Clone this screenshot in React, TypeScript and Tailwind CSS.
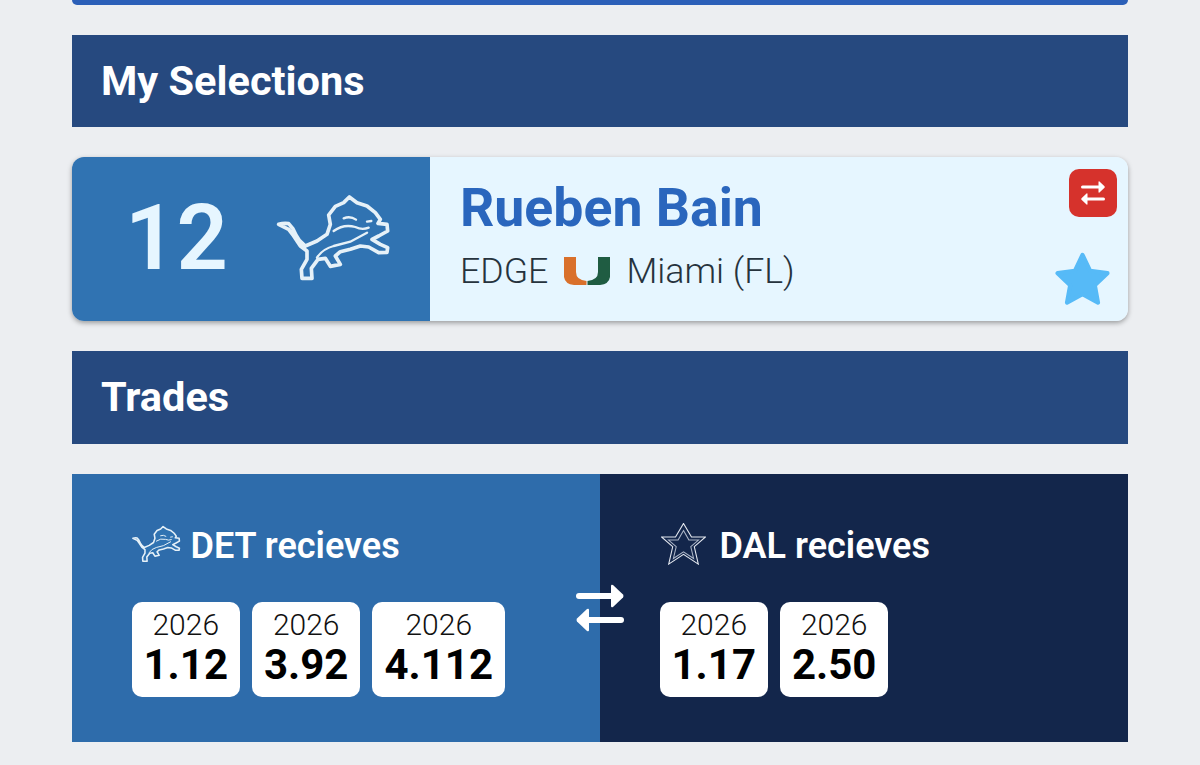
const LION_BODY =
  'M20 100 Q35 96 50 98 L62 112 Q72 135 82 148 L100 165 L135 150 L165 130 L175 100 L170 72 L190 46 L215 35 L232 18 L255 35 L285 45 L310 65 L325 85 L318 97 L345 100 L347 120 L320 135 L300 145 L325 160 L347 170 L345 184 L320 185 L290 168 L265 165 L235 175 L205 182 L190 195 L205 220 L175 226 L160 202 L138 205 L118 232 L120 262 L90 262 L88 235 L105 205 L105 180 L85 165 L65 135 L50 115 Z';

function Lion({ className }: { className: string }) {
  return (
    <svg viewBox="0 0 372 288" className={className}>
      <path d={LION_BODY} fill="#3073b2" stroke="#e6f1f8" strokeWidth="11" strokeLinejoin="round" />
      <path
        d="M185 120 Q215 98 250 108 Q270 118 290 110 M215 82 Q235 74 252 86 M135 200 Q150 175 185 165 L235 152 L285 125 M285 92 L298 90"
        fill="none"
        stroke="#e6f1f8"
        strokeWidth="7"
        strokeLinecap="round"
      />
    </svg>
  );
}

function CowboysStar({ className }: { className: string }) {
  return (
    <svg viewBox="0 0 45 46" preserveAspectRatio="none" className={className}>
      <polygon
        points="22.5,0.5 30.5,15.3 44.5,15.3 33.3,26 37.3,45 22.5,34.3 7.7,45 11.7,26 0.5,15.3 14.5,15.3"
        fill="#13264b"
        stroke="#e4e8ef"
        strokeWidth="1.1"
      />
      <polygon
        points="22.5,8.3 27.9,18.7 37.5,18.7 29.8,26 32.6,38.9 22.5,31.6 12.4,38.9 15.2,26 7.5,18.7 17.1,18.7"
        fill="#13264b"
        stroke="#aab4c6"
        strokeWidth="1.1"
      />
    </svg>
  );
}

function MiamiU({ className }: { className: string }) {
  return (
    <svg viewBox="0 0 46 28" className={className}>
      <path d="M0 0 H12 V15 Q12 23 22.5 24 V28 H10 Q1 27 0 20 Z" fill="#d9702b" />
      <path d="M34 0 H46 V20 Q45 27 36 28 H23.5 V24 Q34 23 34 15 Z" fill="#1f5c42" />
    </svg>
  );
}

function Swap({ className }: { className: string }) {
  return (
    <svg viewBox="0 0 48 48" className={className} fill="white">
      <rect x="0" y="9" width="38" height="6" rx="3" />
      <path d="M35 2 Q35 0 37 1 L47 10.5 Q48 12 47 13.5 L37 23 Q35 24 35 22 Z" />
      <rect x="10" y="33" width="38" height="6" rx="3" />
      <path d="M13 26 Q13 24 11 25 L1 34.5 Q0 36 1 37.5 L11 47 Q13 48 13 46 Z" />
    </svg>
  );
}

function SectionHeader({ title, height }: { title: string; height: string }) {
  return (
    <div className={`${height} flex items-center pl-[29px] bg-[#26497f]`}>
      <h2 className="text-[41.5px] font-bold text-white leading-none">{title}</h2>
    </div>
  );
}

function Pick({ round }: { round: string }) {
  return (
    <div className="h-[95px] px-[12px] pt-[7px] bg-white rounded-[10px] flex flex-col items-center">
      <span className="text-[30px] font-light leading-[32px] text-[#111]">2026</span>
      <span className="text-[42px] font-bold leading-[48px] text-black">{round}</span>
    </div>
  );
}

function TradeSide({
  bg,
  icon,
  label,
  picks,
}: {
  bg: string;
  icon: React.ReactNode;
  label: string;
  picks: string[];
}) {
  return (
    <div className={`flex-1 pl-[59.5px] pt-[48px] ${bg}`}>
      <div className="h-[44px] flex items-center gap-[12px]">
        {icon}
        <span className="pt-[3px] text-[36px] font-semibold text-white leading-none">{label}</span>
      </div>
      <div className="mt-[36px] flex gap-[12px]">
        {picks.map((p) => (
          <Pick key={p} round={p} />
        ))}
      </div>
    </div>
  );
}

export default function App() {
  return (
    <div className="h-[765px] overflow-hidden bg-[#eceef1] px-[72px] font-['Roboto',sans-serif]">
      <div className="h-[5px] bg-[#2b5fb8] rounded-b-[10px]" />

      <div className="mt-[30px]">
        <SectionHeader title="My Selections" height="h-[92px]" />
      </div>

      {/* Selection card */}
      <div className="mt-[30px] h-[164px] flex rounded-[12px] overflow-hidden shadow-[0_2px_5px_rgba(0,0,0,0.35)]">
        <div className="w-[358px] flex items-center bg-[#3073b2] pl-[53px]">
          <span className="w-[147px] text-[90px] font-semibold leading-none text-[#e6f6ff]">12</span>
          <Lion className="w-[124px] h-[96px]" />
        </div>
        <div className="flex-1 flex justify-between bg-[#e6f6ff]">
          <div className="pl-[30px] pt-[21px]">
            <div className="text-[53.6px] font-bold leading-[60px] text-[#2a66bd]">Rueben Bain</div>
            <div className="mt-[11px] flex items-center text-[35.7px] font-light leading-[44px] text-[#26333d]">
              <span>EDGE</span>
              <MiamiU className="ml-[16px] mr-[16px] w-[46px] h-[28px]" />
              <span>Miami (FL)</span>
            </div>
          </div>
          <div className="flex flex-col items-end justify-between pt-[12px] pb-[10px] pr-[11px]">
            <div className="w-[48px] h-[48px] rounded-[10px] bg-[#d6322c] flex items-center justify-center">
              <Swap className="w-[24px] h-[24px]" />
            </div>
            <svg viewBox="0 0 24 24" className="mr-[2px] w-[65px] h-[63px]" fill="#56baf7" stroke="#56baf7" strokeWidth="1.6" strokeLinejoin="round">
              <path d="M12 2.6 L14.9 8.7 L21.5 9.6 L16.7 14.2 L17.9 20.8 L12 17.6 L6.1 20.8 L7.3 14.2 L2.5 9.6 L9.1 8.7 Z" />
            </svg>
          </div>
        </div>
      </div>

      <div className="mt-[30px]">
        <SectionHeader title="Trades" height="h-[93px] pb-[2px]" />
      </div>

      {/* Trade panel */}
      <div className="relative mt-[30px] h-[268px] flex">
        <TradeSide
          bg="bg-[#2e6cab]"
          icon={<Lion className="-ml-[2px] -mr-[4px] w-[53px] h-[41px]" />}
          label="DET recieves"
          picks={['1.12', '3.92', '4.112']}
        />
        <TradeSide
          bg="bg-[#13264b]"
          icon={<CowboysStar className="ml-[1px] mr-[2px] w-[45px] h-[42px]" />}
          label="DAL recieves"
          picks={['1.17', '2.50']}
        />
        <Swap className="absolute left-[504px] top-[110px] w-[48px] h-[48px]" />
      </div>
    </div>
  );
}
